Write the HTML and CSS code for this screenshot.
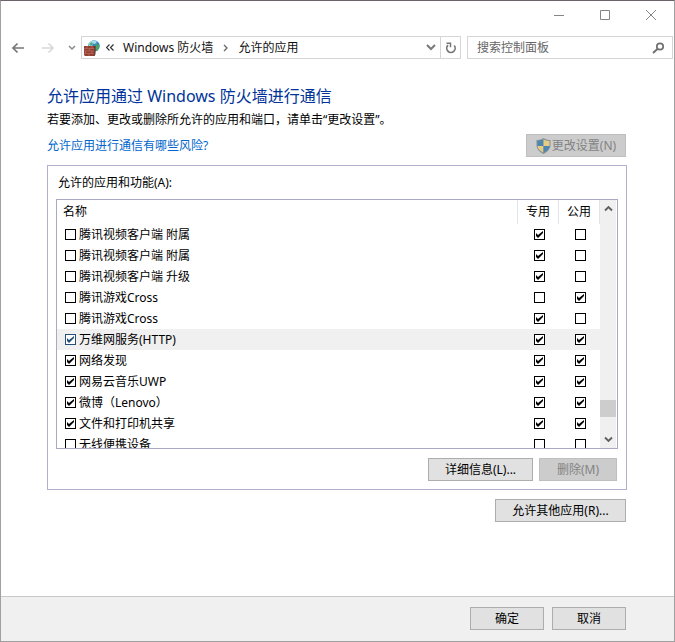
FILE: index.html
```html
<!DOCTYPE html>
<html lang="zh-CN">
<head>
<meta charset="utf-8">
<meta name="viewport" content="width=device-width, initial-scale=1">
<title>允许的应用</title>
<link rel="stylesheet" href="styles.css">
</head>
<body>
<div class="window">
  <header class="titlebar">
    <button class="caption" type="button" aria-label="最小化"><svg width="12" height="12" viewBox="0 0 12 12"><path d="M1 6.5h10"/></svg></button>
    <button class="caption" type="button" aria-label="最大化"><svg width="12" height="12" viewBox="0 0 12 12"><path d="M1.500 1.500h9v9h-9z"/></svg></button>
    <button class="caption" type="button" aria-label="关闭"><svg width="12" height="12" viewBox="0 0 12 12"><path d="M1 1l10 10M11 1L1 11"/></svg></button>
  </header>

  <div class="toolbar">
    <button class="nav-btn" type="button" aria-label="后退"><svg width="14" height="12" viewBox="0 0 14 12"><path d="M13 6H2M6.500 1.500L2 6l4.500 4.500" stroke="#777" stroke-width="1.700"/></svg></button>
    <button class="nav-btn" type="button" aria-label="前进" disabled><svg width="14" height="12" viewBox="0 0 14 12"><path d="M1 6h11M7.500 1.500L12 6l-4.500 4.500" stroke="#d8d8d8" stroke-width="1.600"/></svg></button>
    <button class="recent-btn" type="button" aria-label="最近位置"><svg width="8" height="6" viewBox="0 0 8 6"><path d="M1 1l3 3 3-3" stroke="#8a8a8a" stroke-width="1.500"/></svg></button>
    <nav class="address" aria-label="地址栏">
      <svg class="firewall" width="16" height="16" viewBox="0 0 16 16" aria-hidden="true">
        <circle cx="10" cy="6" r="5.800" fill="#3788bd"/>
        <path d="M5 3c2-3 6-3 8-1l-2 2-2-.5L8 6 5 7z" fill="#a8dcea"/>
        <path d="M12 4l3 1v3l-2 3-2-2z" fill="#4aa45f"/>
        <path d="M5 4l3-2 1 2-2 2z" fill="#54ad78"/>
        <path d="M0 6h11v8l-1 2H1l-1-1z" fill="#933f32"/>
        <path d="M0 8.500h11M0 11h11M0 13.500h11M3 6v2.500M8 6v2.500M5.500 8.500V11M1.500 11v2.500M8 11v2.500M5 13.500V16" stroke="#c07764" stroke-width=".6"/>
        <path d="M11 6v8l-1 2" stroke="#592820"/>
      </svg>
      <button class="overflow" type="button" aria-label="上级"><svg width="8" height="7" viewBox="0 0 8 7"><path d="M3.500.5l-3 3 3 3M7.500.5l-3 3 3 3" stroke="#333" stroke-width="1.200"/></svg></button>
      <a class="crumb" href="#">Windows 防火墙</a>
      <svg class="separator" width="5" height="8" viewBox="0 0 5 8" aria-hidden="true"><path d="M1 1l3 3-3 3" stroke="#666" stroke-width="1.300"/></svg>
      <a class="crumb" href="#">允许的应用</a>
      <button class="address-drop" type="button" aria-label="展开地址"><svg width="10" height="7" viewBox="0 0 10 7"><path d="M1 1l4 4 4-4" stroke="#7a7a7a" stroke-width="2"/></svg></button>
      <button class="refresh" type="button" aria-label="刷新"><svg width="12" height="12" viewBox="0 0 12 12"><path d="M3 3.200A4.200 4.200 0 1 0 9.200 3.500" stroke="#777" stroke-width="1.700"/><path d="M1.500 1.200h4v4" stroke="#777" stroke-width="1.500"/></svg></button>
    </nav>
    <form class="search" role="search">
      <input class="search-input" type="search" placeholder="搜索控制面板" aria-label="搜索控制面板">
      <button class="search-btn" type="button" aria-label="搜索"><svg width="13" height="12" viewBox="0 0 13 12"><circle cx="8" cy="4.500" r="3.200" stroke="#707070" stroke-width="1.700"/><path d="M5.700 6.800L1 11" stroke="#707070" stroke-width="2"/></svg></button>
    </form>
  </div>

  <main class="content">
    <h1 class="title">允许应用通过 Windows 防火墙进行通信</h1>
    <p class="intro">若要添加、更改或删除所允许的应用和端口，请单击“更改设置”。</p>
    <div class="risk-row">
      <a class="risk-link" href="#">允许应用进行通信有哪些风险?</a>
      <button class="btn change" type="button" disabled>
        <svg width="15" height="16" viewBox="0 0 15 16" aria-hidden="true">
          <path d="M7.500 0C5.500 1.500 3 2 .5 2v5c0 4 3 7 7 9 4-2 7-5 7-9V2C12 2 9.500 1.500 7.500 0z" fill="#82909b"/>
          <path d="M7.500 1.300V8H1.500V3c2.500 0 4.500-.6 6-1.700z" fill="#4d87b0"/>
          <path d="M7.500 1.300V8h6V3c-2.500 0-4.500-.6-6-1.700z" fill="#e5cb83"/>
          <path d="M1.500 8h6v6.800C4 13 1.700 10.800 1.500 8z" fill="#e5cb83"/>
          <path d="M13.500 8h-6v6.800c3.500-1.800 5.800-4 6-6.800z" fill="#4d87b0"/>
        </svg>
        <span>更改设置(N)</span>
      </button>
    </div>

    <section class="panel" aria-labelledby="list-label">
      <h2 class="list-label" id="list-label">允许的应用和功能(A):</h2>
      <div class="list">
        <table class="apps">
          <thead>
            <tr><th class="name-col" scope="col">名称</th><th class="flag-col" scope="col">专用</th><th class="flag-col" scope="col">公用</th></tr>
          </thead>
          <tbody>
            <tr><td><label class="app"><input class="check" type="checkbox">腾讯视频客户端 附属</label></td><td class="flag"><input class="check" type="checkbox" aria-label="专用" checked></td><td class="flag"><input class="check" type="checkbox" aria-label="公用"></td></tr>
            <tr><td><label class="app"><input class="check" type="checkbox">腾讯视频客户端 附属</label></td><td class="flag"><input class="check" type="checkbox" aria-label="专用" checked></td><td class="flag"><input class="check" type="checkbox" aria-label="公用"></td></tr>
            <tr><td><label class="app"><input class="check" type="checkbox">腾讯视频客户端 升级</label></td><td class="flag"><input class="check" type="checkbox" aria-label="专用" checked></td><td class="flag"><input class="check" type="checkbox" aria-label="公用"></td></tr>
            <tr><td><label class="app"><input class="check" type="checkbox">腾讯游戏Cross</label></td><td class="flag"><input class="check" type="checkbox" aria-label="专用"></td><td class="flag"><input class="check" type="checkbox" aria-label="公用" checked></td></tr>
            <tr><td><label class="app"><input class="check" type="checkbox">腾讯游戏Cross</label></td><td class="flag"><input class="check" type="checkbox" aria-label="专用" checked></td><td class="flag"><input class="check" type="checkbox" aria-label="公用"></td></tr>
            <tr class="selected"><td><label class="app"><input class="check current" type="checkbox" checked>万维网服务(HTTP)</label></td><td class="flag"><input class="check" type="checkbox" aria-label="专用" checked></td><td class="flag"><input class="check" type="checkbox" aria-label="公用" checked></td></tr>
            <tr><td><label class="app"><input class="check" type="checkbox" checked>网络发现</label></td><td class="flag"><input class="check" type="checkbox" aria-label="专用" checked></td><td class="flag"><input class="check" type="checkbox" aria-label="公用" checked></td></tr>
            <tr><td><label class="app"><input class="check" type="checkbox" checked>网易云音乐UWP</label></td><td class="flag"><input class="check" type="checkbox" aria-label="专用" checked></td><td class="flag"><input class="check" type="checkbox" aria-label="公用" checked></td></tr>
            <tr><td><label class="app"><input class="check" type="checkbox" checked>微博（Lenovo）</label></td><td class="flag"><input class="check" type="checkbox" aria-label="专用" checked></td><td class="flag"><input class="check" type="checkbox" aria-label="公用" checked></td></tr>
            <tr><td><label class="app"><input class="check" type="checkbox" checked>文件和打印机共享</label></td><td class="flag"><input class="check" type="checkbox" aria-label="专用" checked></td><td class="flag"><input class="check" type="checkbox" aria-label="公用" checked></td></tr>
            <tr><td><label class="app"><input class="check" type="checkbox">无线便携设备</label></td><td class="flag"><input class="check" type="checkbox" aria-label="专用"></td><td class="flag"><input class="check" type="checkbox" aria-label="公用"></td></tr>
          </tbody>
        </table>
        <div class="scrollbar">
          <button class="scroll-btn" type="button" aria-label="向上滚动"><svg width="9" height="7" viewBox="0 0 9 7"><path d="M1 5.500L4.500 2 8 5.500" stroke="#606060" stroke-width="1.900"/></svg></button>
          <div class="track"><div class="thumb"></div></div>
          <button class="scroll-btn" type="button" aria-label="向下滚动"><svg width="9" height="7" viewBox="0 0 9 7"><path d="M1 1.500L4.500 5 8 1.500" stroke="#606060" stroke-width="1.900"/></svg></button>
        </div>
      </div>
      <div class="actions">
        <button class="btn details" type="button">详细信息(L)...</button>
        <button class="btn remove" type="button" disabled>删除(M)</button>
      </div>
    </section>
    <div class="other-row">
      <button class="btn other" type="button">允许其他应用(R)...</button>
    </div>
  </main>

  <footer class="footer">
    <button class="btn confirm" type="button">确定</button>
    <button class="btn confirm" type="button">取消</button>
  </footer>
</div>
</body>
</html>
```

FILE: styles.css
```css
* {
  box-sizing: border-box;
}

body {
  margin: 0;
  background: #fff;
  color: #000;
  font: 12px/18px "Noto Sans", "Noto Sans CJK SC", sans-serif;
}

button,
input {
  margin: 0;
  font: inherit;
}

button {
  display: flex;
  align-items: center;
  justify-content: center;
  padding: 0;
  border: 0;
  background: none;
  color: inherit;
}

svg {
  flex: none;
  fill: none;
}

.window {
  display: flex;
  flex-direction: column;
  min-height: 100vh;
  border: 1px solid #a0a0a0;
  border-top-color: #6b6369;
}

/* Title bar */
.titlebar {
  display: flex;
  justify-content: flex-end;
  height: 28px;
  margin-bottom: 7px;
}

.caption {
  width: 46px;
}

.caption svg {
  stroke: #858585;
}

/* Navigation */
.toolbar {
  display: flex;
  height: 23px;
  padding: 0 1px 0 2px;
}

.nav-btn {
  width: 30px;
}

.recent-btn {
  width: 18px;
}

.address {
  display: flex;
  flex: 1;
  align-items: center;
  margin-right: 6px;
  padding-left: 2px;
  border: 1px solid #d5d5d5;
}

.overflow {
  margin: 0 9px 0 6px;
}

.crumb {
  color: #111;
  text-decoration: none;
}

.separator {
  margin: 0 10px;
}

.address-drop {
  width: 18px;
  margin-left: auto;
}

.refresh {
  align-self: stretch;
  width: 20px;
  border-left: 1px solid #d5d5d5;
}

.search {
  display: flex;
  width: 206px;
  border: 1px solid #d5d5d5;
}

.search-input {
  flex: 1;
  min-width: 0;
  padding: 0 0 0 9px;
  border: 0;
  outline: 0;
  background: none;
  appearance: none;
}

.search-input::placeholder {
  color: #666;
  opacity: 1;
}

.search-btn {
  width: 28px;
}

/* Content */
.content {
  flex: 1;
  padding: 25px 47px 16px 46px;
}

.title {
  margin: 0;
  color: #003399;
  font-size: 16px;
  font-weight: 400;
  line-height: 24px;
}

.intro {
  margin: 3px 0 5px;
}

.risk-row {
  display: flex;
  align-items: center;
  justify-content: space-between;
  margin: 0 1px 8px 0;
}

.risk-link {
  color: #0066cc;
  text-decoration: none;
}

.btn {
  height: 23px;
  border: 1px solid #adadad;
  background: #e1e1e1;
}

.btn:disabled {
  border-color: #bfbfbf;
  background: #ccc;
  color: #838383;
}

.change {
  gap: 1px;
  width: 100px;
}

.panel {
  padding: 8px;
  border: 1px solid #b1b1cb;
}

.list-label {
  margin: 0 0 7px 2px;
  font-size: 12px;
  font-weight: 400;
}

.list {
  display: flex;
  height: 250px;
  overflow: hidden;
  border: 1px solid #a9a9c5;
}

.apps {
  flex: 1;
  align-self: flex-start;
  border-collapse: separate;
  border-spacing: 0;
  table-layout: fixed;
}

.apps th {
  height: 24px;
  padding: 0;
  border-right: 1px solid #e2e2ea;
  font-weight: 400;
}

.apps .name-col {
  padding-left: 6px;
  text-align: left;
}

.flag-col {
  width: 41px;
}

.apps td {
  height: 21px;
  padding: 0;
}

.app {
  display: flex;
  align-items: center;
  gap: 3px;
  padding-left: 8px;
}

.flag .check {
  margin: 0 auto;
}

.apps .flag {
  padding-left: 2px;
}

.selected {
  background: #f0f0f0;
}

.check {
  display: block;
  flex: none;
  width: 11px;
  height: 11px;
  border: 1px solid #000;
  background: #fff;
  appearance: none;
}

.check:checked::after {
  display: block;
  width: 9px;
  height: 9px;
  background: #000;
  clip-path: polygon(1px 3px, 3px 5px, 8px 1px, 8px 3px, 3px 8px, 1px 6px);
  content: "";
}

.check.current {
  border-color: #264f78;
}

.check.current::after {
  background: #264f78;
}

.scrollbar {
  display: flex;
  flex-direction: column;
  width: 16px;
  margin-right: 1px;
  background: #f0f0f0;
}

.scroll-btn {
  height: 17px;
}

.track {
  display: flex;
  flex: 1;
  flex-direction: column;
  justify-content: flex-end;
  padding-bottom: 14px;
}

.thumb {
  height: 17px;
  background: #cdcdcd;
}

.actions {
  display: flex;
  justify-content: flex-end;
  gap: 6px;
  margin: 9px 1px 0 0;
}

.details {
  width: 105px;
}

.remove {
  width: 78px;
}

.other-row {
  display: flex;
  justify-content: flex-end;
  margin: 9px 1px 0 0;
}

.other {
  width: 131px;
}

/* Footer */
.footer {
  display: flex;
  justify-content: flex-end;
  gap: 8px;
  padding: 10px 48px 11px;
  border-top: 1px solid #c8c8c8;
  background: #f0f0f0;
}

.confirm {
  width: 74px;
}
```
